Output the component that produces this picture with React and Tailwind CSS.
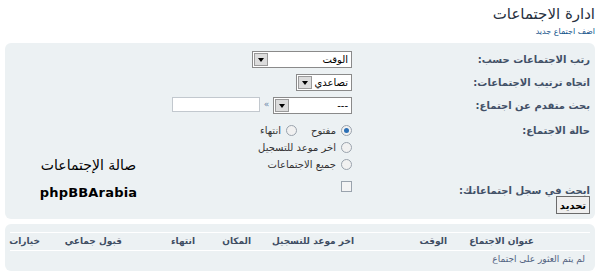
import React from "react";

const Select = ({ width, value }) => (
  <div
    className={`${width} h-[17px] bg-white border border-[#8a8a8a] flex items-center justify-between pr-[3px] pl-[1px] text-[10px] text-black`}
  >
    <span>{value}</span>
    <span className="w-[14px] h-[13px] bg-[#dcdcdc] border border-[#9a9a9a] flex items-center justify-center">
      <svg width="6" height="4" viewBox="0 0 6 4">
        <path d="M0 0h6L3 4z" fill="#000" />
      </svg>
    </span>
  </div>
);

const Radio = ({ checked }) => (
  <span className="w-[11px] h-[11px] rounded-full border border-[#9aa3ad] bg-[#f1f1f1] flex items-center justify-center shrink-0">
    {checked && <span className="w-[5px] h-[5px] rounded-full bg-[#2a6fb5]" />}
  </span>
);

const Label = ({ children }) => (
  <div className="text-[10px] font-bold text-[#425067] leading-[17px]">{children}</div>
);

const columns = [
  "عنوان الاجتماع",
  "الوقت",
  "اخر موعد للتسجيل",
  "المكان",
  "انتهاء",
  "قبول جماعي",
  "خيارات",
];

export default function App() {
  return (
    <div
      dir="rtl"
      className="w-[600px] h-[278px] bg-white px-[5px] pt-[4px]"
      style={{ fontFamily: '"DejaVu Sans", "Noto Sans", sans-serif' }}
    >
      <h1 className="text-[15px] leading-[20px] text-[#28313f] font-normal">ادارة الاجتماعات</h1>
      <a className="block text-[8px] leading-[12px] text-[#105289] mt-[2px]">اضف اجتماع جديد</a>

      <div className="mt-[5px] h-[176px] bg-[#ecf1f3] rounded-[6px] flex pt-[8px] pr-[5px]">
        <div className="w-[238px] shrink-0 flex flex-col">
          <div className="h-[23px]"><Label>رتب الاجتماعات حسب:</Label></div>
          <div className="h-[23px]"><Label>اتجاه ترتيب الاجتماعات:</Label></div>
          <div className="h-[25px]"><Label>بحث متقدم عن اجتماع:</Label></div>
          <div className="h-[60px]"><Label>حالة الاجتماع:</Label></div>
          <div className="h-[10px]"><Label>ابحث في سجل اجتماعاتك:</Label></div>
          <button className="mt-[4px] self-start w-[34px] h-[18px] border border-[#6b6b6b] bg-[#efefef] text-[10px] font-bold text-black flex items-center justify-center">
            تحديد
          </button>
        </div>

        <div className="w-[180px] shrink-0 flex flex-col">
          <div className="h-[23px]"><Select width="w-[100px]" value="الوقت" /></div>
          <div className="h-[23px]"><Select width="w-[56px]" value="تصاعدي" /></div>
          <div className="h-[25px] flex items-start gap-[4px]">
            <Select width="w-[80px]" value="---" />
            <span className="text-[9px] leading-[15px] text-[#6a87a8]">»</span>
            <div className="w-[89px] h-[15px] bg-white border border-[#c2c8ce]" />
          </div>
          <div className="h-[17px] flex items-center gap-[5px] text-[10px] text-[#333]">
            <Radio checked />
            <span>مفتوح</span>
            <span className="w-[4px]" />
            <Radio />
            <span>انتهاء</span>
          </div>
          <div className="h-[17px] flex items-center gap-[5px] text-[10px] text-[#333]">
            <Radio />
            <span>اخر موعد للتسجيل</span>
          </div>
          <div className="h-[17px] flex items-center gap-[5px] text-[10px] text-[#333]">
            <Radio />
            <span>جميع الاجتماعات</span>
          </div>
          <div className="h-[19px] flex items-end">
            <span className="w-[11px] h-[11px] border border-[#9aa3ad] bg-[#f4f4f4]" />
          </div>
        </div>

        <div className="flex-1 flex justify-center pt-[106px]">
          <div className="flex flex-col items-center gap-[12px] text-black">
            <div className="text-[14px] leading-[16px] font-normal">صالة الإجتماعات</div>
            <div dir="ltr" className="text-[13px] leading-[16px] font-bold tracking-[0.2px]">phpBBArabia</div>
          </div>
        </div>
      </div>

      <div className="mt-[5px] h-[47px] bg-[#ecf1f3] rounded-[6px] px-[5px] pt-[8px]">
        <div className="border-t border-white grid grid-cols-[87px_93px_103px_56px_73px_82px_1fr] pr-[56px] h-[19px] items-center border-b text-[9px] font-bold text-[#3e4d63]">
          {columns.map((c) => (
            <div key={c}>{c}</div>
          ))}
        </div>
        <div className="text-[9px] text-[#536482] pr-[5px] leading-[16px]">لم يتم العثور على اجتماع</div>
      </div>
    </div>
  );
}
